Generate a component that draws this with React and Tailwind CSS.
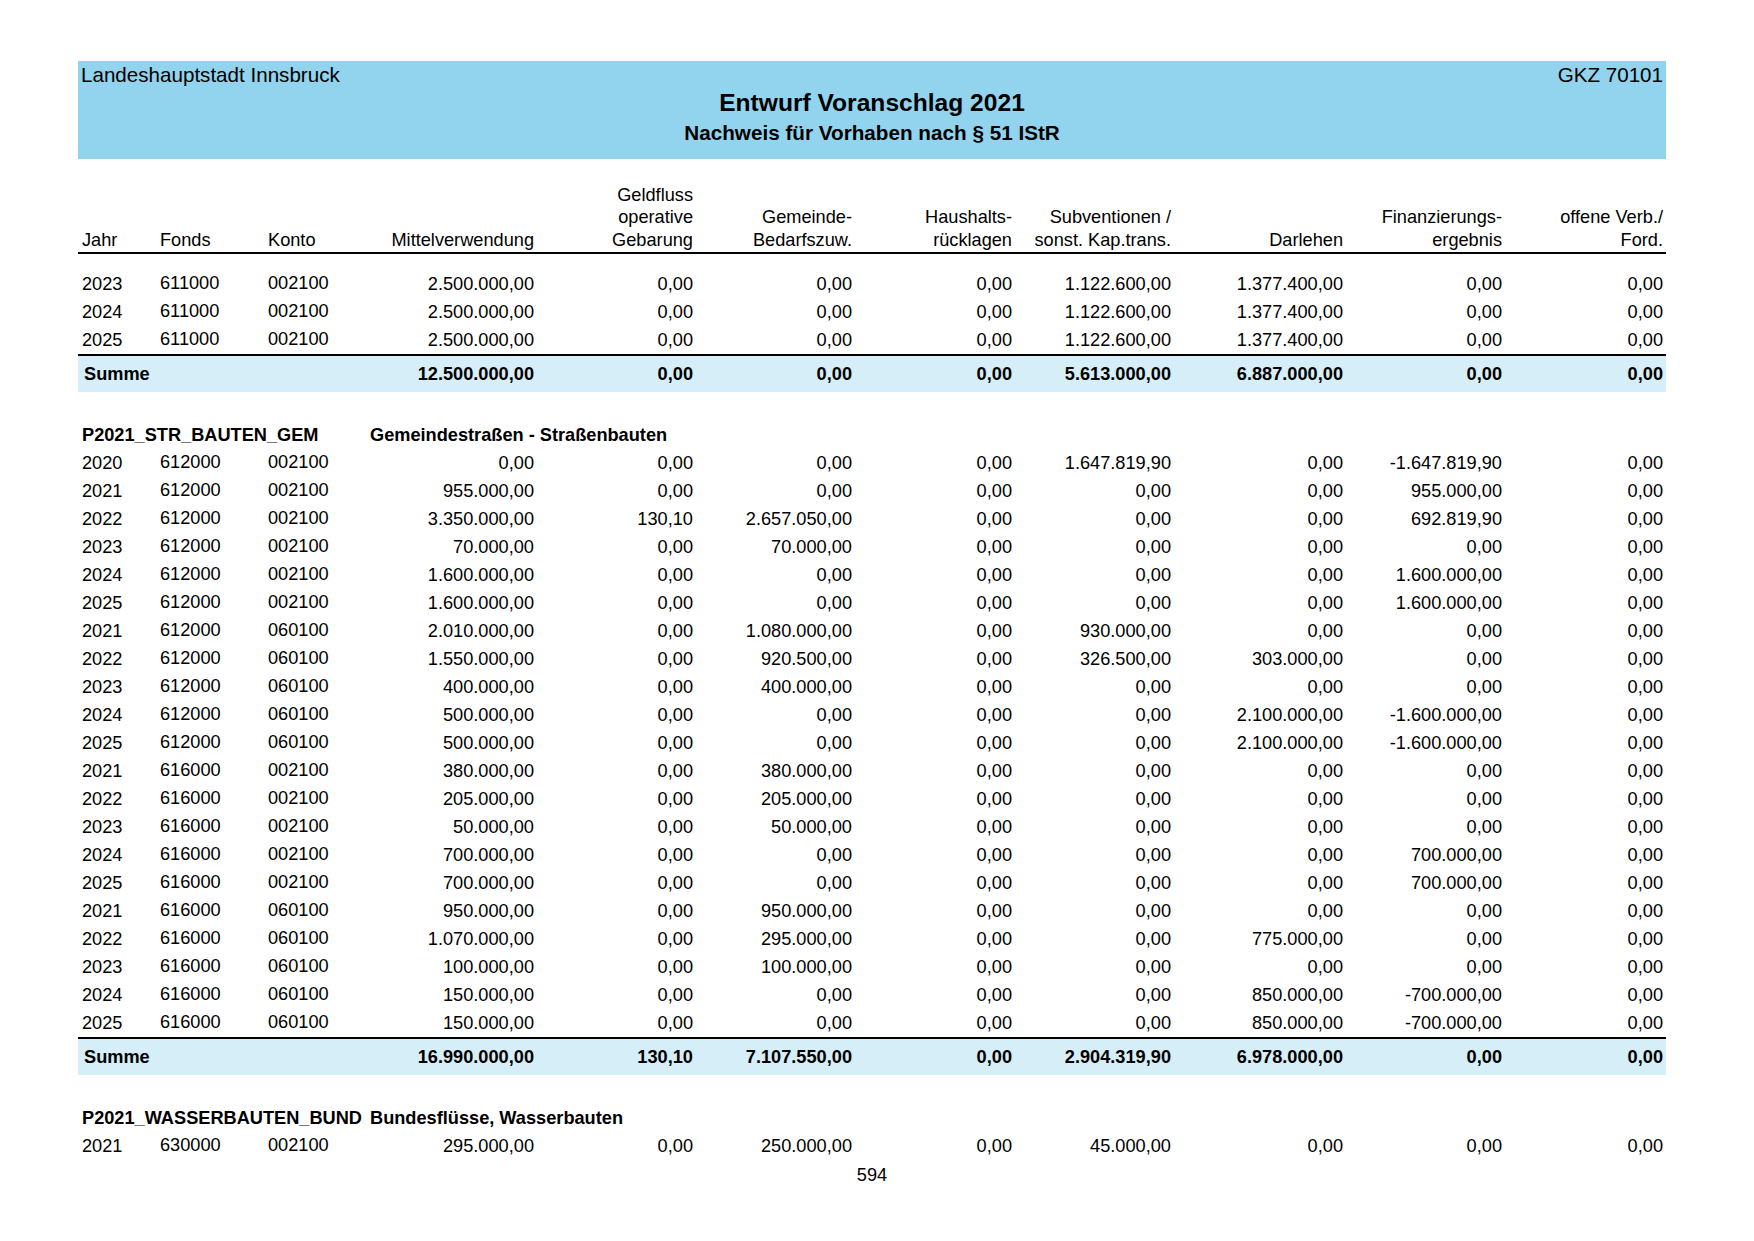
const COLS = 'grid grid-cols-[78px_108px_106px_167px_159px_159px_160px_159px_172px_159px_161px]';

const headers = [
  { lines: ['Jahr'], left: true },
  { lines: ['Fonds'], left: true },
  { lines: ['Konto'], left: true },
  { lines: ['Mittelverwendung'] },
  { lines: ['Geldfluss', 'operative', 'Gebarung'] },
  { lines: ['Gemeinde-', 'Bedarfszuw.'] },
  { lines: ['Haushalts-', 'rücklagen'] },
  { lines: ['Subventionen /', 'sonst. Kap.trans.'] },
  { lines: ['Darlehen'] },
  { lines: ['Finanzierungs-', 'ergebnis'] },
  { lines: ['offene Verb./', 'Ford.'] },
];

const sections = [
  {
    rows: [
      ['2023', '611000', '002100', '2.500.000,00', '0,00', '0,00', '0,00', '1.122.600,00', '1.377.400,00', '0,00', '0,00'],
      ['2024', '611000', '002100', '2.500.000,00', '0,00', '0,00', '0,00', '1.122.600,00', '1.377.400,00', '0,00', '0,00'],
      ['2025', '611000', '002100', '2.500.000,00', '0,00', '0,00', '0,00', '1.122.600,00', '1.377.400,00', '0,00', '0,00'],
    ],
    sum: ['12.500.000,00', '0,00', '0,00', '0,00', '5.613.000,00', '6.887.000,00', '0,00', '0,00'],
  },
  {
    code: 'P2021_STR_BAUTEN_GEM',
    title: 'Gemeindestraßen - Straßenbauten',
    rows: [
      ['2020', '612000', '002100', '0,00', '0,00', '0,00', '0,00', '1.647.819,90', '0,00', '-1.647.819,90', '0,00'],
      ['2021', '612000', '002100', '955.000,00', '0,00', '0,00', '0,00', '0,00', '0,00', '955.000,00', '0,00'],
      ['2022', '612000', '002100', '3.350.000,00', '130,10', '2.657.050,00', '0,00', '0,00', '0,00', '692.819,90', '0,00'],
      ['2023', '612000', '002100', '70.000,00', '0,00', '70.000,00', '0,00', '0,00', '0,00', '0,00', '0,00'],
      ['2024', '612000', '002100', '1.600.000,00', '0,00', '0,00', '0,00', '0,00', '0,00', '1.600.000,00', '0,00'],
      ['2025', '612000', '002100', '1.600.000,00', '0,00', '0,00', '0,00', '0,00', '0,00', '1.600.000,00', '0,00'],
      ['2021', '612000', '060100', '2.010.000,00', '0,00', '1.080.000,00', '0,00', '930.000,00', '0,00', '0,00', '0,00'],
      ['2022', '612000', '060100', '1.550.000,00', '0,00', '920.500,00', '0,00', '326.500,00', '303.000,00', '0,00', '0,00'],
      ['2023', '612000', '060100', '400.000,00', '0,00', '400.000,00', '0,00', '0,00', '0,00', '0,00', '0,00'],
      ['2024', '612000', '060100', '500.000,00', '0,00', '0,00', '0,00', '0,00', '2.100.000,00', '-1.600.000,00', '0,00'],
      ['2025', '612000', '060100', '500.000,00', '0,00', '0,00', '0,00', '0,00', '2.100.000,00', '-1.600.000,00', '0,00'],
      ['2021', '616000', '002100', '380.000,00', '0,00', '380.000,00', '0,00', '0,00', '0,00', '0,00', '0,00'],
      ['2022', '616000', '002100', '205.000,00', '0,00', '205.000,00', '0,00', '0,00', '0,00', '0,00', '0,00'],
      ['2023', '616000', '002100', '50.000,00', '0,00', '50.000,00', '0,00', '0,00', '0,00', '0,00', '0,00'],
      ['2024', '616000', '002100', '700.000,00', '0,00', '0,00', '0,00', '0,00', '0,00', '700.000,00', '0,00'],
      ['2025', '616000', '002100', '700.000,00', '0,00', '0,00', '0,00', '0,00', '0,00', '700.000,00', '0,00'],
      ['2021', '616000', '060100', '950.000,00', '0,00', '950.000,00', '0,00', '0,00', '0,00', '0,00', '0,00'],
      ['2022', '616000', '060100', '1.070.000,00', '0,00', '295.000,00', '0,00', '0,00', '775.000,00', '0,00', '0,00'],
      ['2023', '616000', '060100', '100.000,00', '0,00', '100.000,00', '0,00', '0,00', '0,00', '0,00', '0,00'],
      ['2024', '616000', '060100', '150.000,00', '0,00', '0,00', '0,00', '0,00', '850.000,00', '-700.000,00', '0,00'],
      ['2025', '616000', '060100', '150.000,00', '0,00', '0,00', '0,00', '0,00', '850.000,00', '-700.000,00', '0,00'],
    ],
    sum: ['16.990.000,00', '130,10', '7.107.550,00', '0,00', '2.904.319,90', '6.978.000,00', '0,00', '0,00'],
  },
  {
    code: 'P2021_WASSERBAUTEN_BUND',
    title: 'Bundesflüsse, Wasserbauten',
    rows: [
      ['2021', '630000', '002100', '295.000,00', '0,00', '250.000,00', '0,00', '45.000,00', '0,00', '0,00', '0,00'],
    ],
  },
];

function DataRow({ cells }) {
  return (
    <div className={`${COLS} h-[28px] items-center`}>
      <span className="pl-[4px]">{cells[0]}</span>
      <span className="pl-[4px] pb-[2px]">{cells[1]}</span>
      <span className="pl-[4px] pb-[2px]">{cells[2]}</span>
      {cells.slice(3).map((v, i) => (
        <span key={i} className="text-right pr-[3px]">{v}</span>
      ))}
    </div>
  );
}

function SumRow({ values }) {
  return (
    <div className={`${COLS} h-[38px] items-center border-t-2 border-black bg-[#d6eef8] font-bold`}>
      <span className="col-span-3 pl-[6px]">Summe</span>
      {values.map((v, i) => (
        <span key={i} className="text-right pr-[3px]">{v}</span>
      ))}
    </div>
  );
}

export default function App() {
  return (
    <div className="min-h-screen bg-white text-black font-['Liberation_Sans',Arial,sans-serif] text-[18.2px]">
      <div className="w-[1588px] ml-[78px] pt-[61px]">
        <header className="h-[98px] bg-[#92d4ee] px-[3px] pt-[2px]">
          <div className="flex justify-between text-[20.6px] leading-[24px]">
            <span>Landeshauptstadt Innsbruck</span>
            <span>GKZ 70101</span>
          </div>
          <h1 className="text-center font-bold text-[24.6px] leading-[28px] mt-[2px]">Entwurf Voranschlag 2021</h1>
          <h2 className="text-center font-bold text-[20.7px] leading-[24px] mt-[4px]">Nachweis für Vorhaben nach § 51 IStR</h2>
        </header>

        <div className={`${COLS} items-end mt-[25px] pb-[1px] border-b-2 border-black leading-[22.4px]`}>
          {headers.map((h, i) => (
            <div key={i} className={h.left ? 'pl-[4px]' : 'text-right pr-[3px]'}>
              {h.lines.map((l) => (
                <div key={l}>{l}</div>
              ))}
            </div>
          ))}
        </div>

        <div className="mt-[16px]">
          {sections.map((s, si) => (
            <section key={si} className={si > 0 ? 'mt-[29px]' : ''}>
              {s.code && (
                <div className="flex h-[28px] items-center font-bold">
                  <span className="min-w-[292px] pl-[4px] pr-[5px]">{s.code}</span>
                  <span>{s.title}</span>
                </div>
              )}
              {s.rows.map((r, ri) => (
                <DataRow key={ri} cells={r} />
              ))}
              {s.sum && <SumRow values={s.sum} />}
            </section>
          ))}
        </div>

        <div className="text-center leading-[22px] mt-[4px]">594</div>
      </div>
    </div>
  );
}
